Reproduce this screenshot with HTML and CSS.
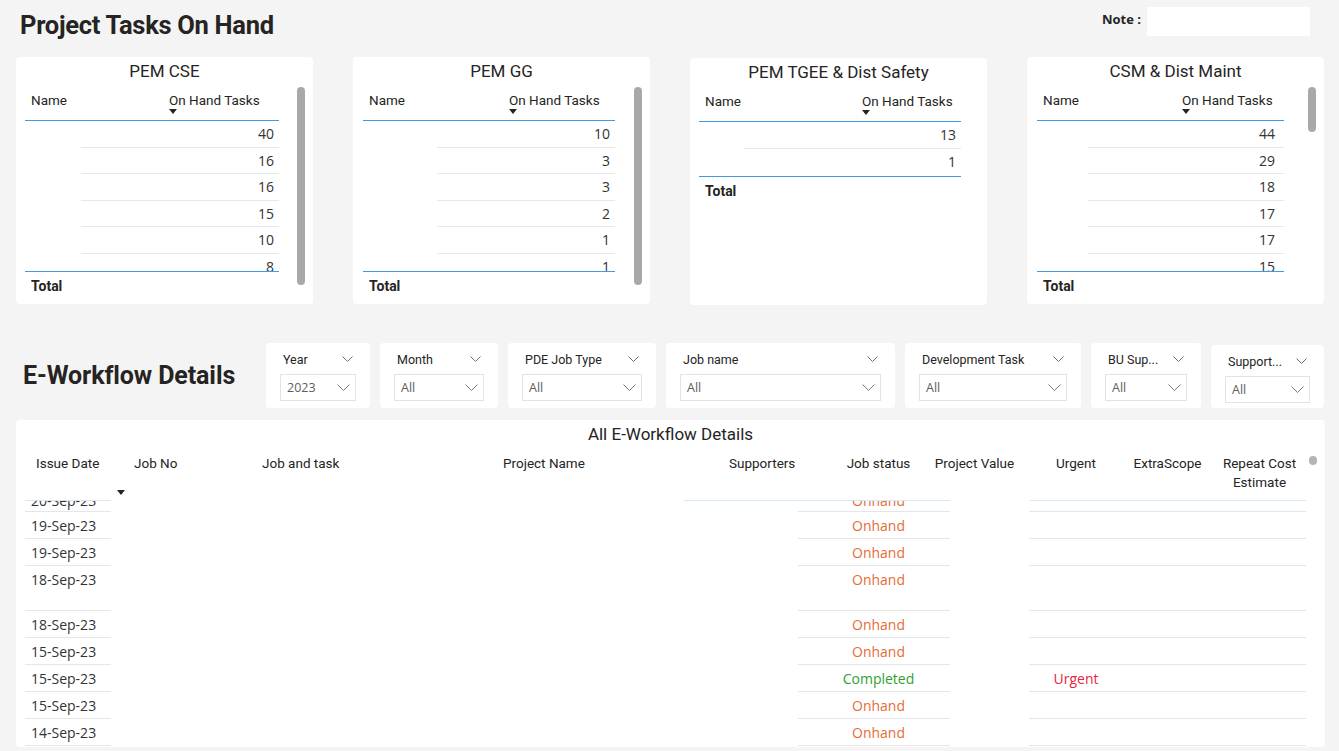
FILE: index.html
```html
<!DOCTYPE html>
<html lang="en">
<head>
<meta charset="utf-8">
<title>Project Tasks On Hand</title>
<link rel="stylesheet" href="styles.css">
</head>
<body>
<header class="topbar">
  <h1 class="page-title">Project Tasks On Hand</h1>
  <div class="note"><span class="note-label">Note :</span><div class="note-box"></div></div>
</header>

<section class="cards">
  <div class="card card-cse">
    <div class="card-title">PEM CSE</div>
    <div class="card-body">
      <div class="mtable">
        <div class="mhead"><div>Name</div><div>On Hand Tasks<span class="sort"></span></div></div>
        <div class="mbody">
          <div class="mrow">40</div><div class="mrow">16</div><div class="mrow">16</div>
          <div class="mrow">15</div><div class="mrow">10</div><div class="mrow">8</div>
        </div>
        <div class="mtotal">Total</div>
      </div>
      <div class="vscroll"><div class="thumb"></div></div>
    </div>
  </div>

  <div class="card card-gg">
    <div class="card-title">PEM GG</div>
    <div class="card-body">
      <div class="mtable">
        <div class="mhead"><div>Name</div><div>On Hand Tasks<span class="sort"></span></div></div>
        <div class="mbody">
          <div class="mrow">10</div><div class="mrow">3</div><div class="mrow">3</div>
          <div class="mrow">2</div><div class="mrow">1</div><div class="mrow">1</div>
        </div>
        <div class="mtotal">Total</div>
      </div>
      <div class="vscroll"><div class="thumb"></div></div>
    </div>
  </div>

  <div class="card card-tgee">
    <div class="card-title">PEM TGEE &amp; Dist Safety</div>
    <div class="card-body">
      <div class="mtable">
        <div class="mhead"><div>Name</div><div>On Hand Tasks<span class="sort"></span></div></div>
        <div class="mbody">
          <div class="mrow">13</div><div class="mrow">1</div>
        </div>
        <div class="mtotal">Total</div>
      </div>
    </div>
  </div>

  <div class="card card-dist">
    <div class="card-title">CSM &amp; Dist Maint</div>
    <div class="card-body">
      <div class="mtable">
        <div class="mhead"><div>Name</div><div>On Hand Tasks<span class="sort"></span></div></div>
        <div class="mbody">
          <div class="mrow">44</div><div class="mrow">29</div><div class="mrow">18</div>
          <div class="mrow">17</div><div class="mrow">17</div><div class="mrow">15</div>
        </div>
        <div class="mtotal">Total</div>
      </div>
      <div class="vscroll"><div class="thumb"></div></div>
    </div>
  </div>
</section>

<section class="filters">
  <h2 class="section-title">E-Workflow Details</h2>
  <div class="slicers">
    <div class="slicer s-year">
      <div class="slicer-head"><span>Year</span><svg class="chev" width="11" height="7" viewBox="0 0 11 7"><polyline points="0.5,0.5 5.5,5.5 10.5,0.5" fill="none" stroke="#6f6f6f" stroke-width="1"/></svg></div>
      <div class="dropdown"><span>2023</span><svg width="13" height="8" viewBox="0 0 13 8"><polyline points="0.5,0.5 6.5,6.5 12.5,0.5" fill="none" stroke="#7a7a7a" stroke-width="1"/></svg></div>
    </div>
    <div class="slicer s-month">
      <div class="slicer-head"><span>Month</span><svg class="chev" width="11" height="7" viewBox="0 0 11 7"><polyline points="0.5,0.5 5.5,5.5 10.5,0.5" fill="none" stroke="#6f6f6f" stroke-width="1"/></svg></div>
      <div class="dropdown"><span>All</span><svg width="13" height="8" viewBox="0 0 13 8"><polyline points="0.5,0.5 6.5,6.5 12.5,0.5" fill="none" stroke="#7a7a7a" stroke-width="1"/></svg></div>
    </div>
    <div class="slicer s-type">
      <div class="slicer-head"><span>PDE Job Type</span><svg class="chev" width="11" height="7" viewBox="0 0 11 7"><polyline points="0.5,0.5 5.5,5.5 10.5,0.5" fill="none" stroke="#6f6f6f" stroke-width="1"/></svg></div>
      <div class="dropdown"><span>All</span><svg width="13" height="8" viewBox="0 0 13 8"><polyline points="0.5,0.5 6.5,6.5 12.5,0.5" fill="none" stroke="#7a7a7a" stroke-width="1"/></svg></div>
    </div>
    <div class="slicer s-job">
      <div class="slicer-head"><span>Job name</span><svg class="chev" width="11" height="7" viewBox="0 0 11 7"><polyline points="0.5,0.5 5.5,5.5 10.5,0.5" fill="none" stroke="#6f6f6f" stroke-width="1"/></svg></div>
      <div class="dropdown"><span>All</span><svg width="13" height="8" viewBox="0 0 13 8"><polyline points="0.5,0.5 6.5,6.5 12.5,0.5" fill="none" stroke="#7a7a7a" stroke-width="1"/></svg></div>
    </div>
    <div class="slicer s-dev">
      <div class="slicer-head"><span>Development Task</span><svg class="chev" width="11" height="7" viewBox="0 0 11 7"><polyline points="0.5,0.5 5.5,5.5 10.5,0.5" fill="none" stroke="#6f6f6f" stroke-width="1"/></svg></div>
      <div class="dropdown"><span>All</span><svg width="13" height="8" viewBox="0 0 13 8"><polyline points="0.5,0.5 6.5,6.5 12.5,0.5" fill="none" stroke="#7a7a7a" stroke-width="1"/></svg></div>
    </div>
    <div class="slicer s-bu">
      <div class="slicer-head"><span>BU Sup...</span><svg class="chev" width="11" height="7" viewBox="0 0 11 7"><polyline points="0.5,0.5 5.5,5.5 10.5,0.5" fill="none" stroke="#6f6f6f" stroke-width="1"/></svg></div>
      <div class="dropdown"><span>All</span><svg width="13" height="8" viewBox="0 0 13 8"><polyline points="0.5,0.5 6.5,6.5 12.5,0.5" fill="none" stroke="#7a7a7a" stroke-width="1"/></svg></div>
    </div>
    <div class="slicer s-sup">
      <div class="slicer-head"><span>Support...</span><svg class="chev" width="11" height="7" viewBox="0 0 11 7"><polyline points="0.5,0.5 5.5,5.5 10.5,0.5" fill="none" stroke="#6f6f6f" stroke-width="1"/></svg></div>
      <div class="dropdown"><span>All</span><svg width="13" height="8" viewBox="0 0 13 8"><polyline points="0.5,0.5 6.5,6.5 12.5,0.5" fill="none" stroke="#7a7a7a" stroke-width="1"/></svg></div>
    </div>
  </div>
</section>

<section class="grid-card">
  <div class="grid-title">All E-Workflow Details</div>
  <div class="gtable">
    <div class="ghead">
      <div class="hc first">Issue Date<span class="sort"></span></div>
      <div class="hc">Job No</div>
      <div class="hc">Job and task</div>
      <div class="hc">Project Name</div>
      <div class="hc">Supporters</div>
      <div class="hc c">Job status</div>
      <div class="hc c">Project Value</div>
      <div class="hc c">Urgent</div>
      <div class="hc c">ExtraScope</div>
      <div class="hc c">Repeat Cost<br>Estimate</div>
    </div>
    <div class="gbody">
      <div class="grow partial"><div class="gc">20-Sep-23</div><div></div><div></div><div></div><div></div><div class="gc c onhand">Onhand</div><div></div><div></div><div></div><div></div></div>
      <div class="grow"><div class="gc">19-Sep-23</div><div></div><div></div><div></div><div></div><div class="gc c onhand">Onhand</div><div></div><div></div><div></div><div></div></div>
      <div class="grow"><div class="gc">19-Sep-23</div><div></div><div></div><div></div><div></div><div class="gc c onhand">Onhand</div><div></div><div></div><div></div><div></div></div>
      <div class="grow tall"><div class="gc">18-Sep-23</div><div></div><div></div><div></div><div></div><div class="gc c onhand">Onhand</div><div></div><div></div><div></div><div></div></div>
      <div class="grow"><div class="gc">18-Sep-23</div><div></div><div></div><div></div><div></div><div class="gc c onhand">Onhand</div><div></div><div></div><div></div><div></div></div>
      <div class="grow"><div class="gc">15-Sep-23</div><div></div><div></div><div></div><div></div><div class="gc c onhand">Onhand</div><div></div><div></div><div></div><div></div></div>
      <div class="grow"><div class="gc">15-Sep-23</div><div></div><div></div><div></div><div></div><div class="gc c done">Completed</div><div></div><div class="gc c urgent">Urgent</div><div></div><div></div></div>
      <div class="grow"><div class="gc">15-Sep-23</div><div></div><div></div><div></div><div></div><div class="gc c onhand">Onhand</div><div></div><div></div><div></div><div></div></div>
      <div class="grow"><div class="gc">14-Sep-23</div><div></div><div></div><div></div><div></div><div class="gc c onhand">Onhand</div><div></div><div></div><div></div><div></div></div>
    </div>
  </div>
  <div class="gscroll"></div>
</section>
</body>
</html>
```

FILE: styles.css
```css
* { box-sizing: border-box; margin: 0; padding: 0; }

body {
  width: 1339px;
  height: 751px;
  overflow: hidden;
  background: #f4f4f4;
  font-family: "Open Sans", "Noto Sans", sans-serif;
  color: #252423;
}

/* ---------- top bar ---------- */
.topbar {
  display: flex;
  height: 57px;
  padding: 0 29px 0 20px;
}
.page-title {
  font-family: Roboto, sans-serif;
  font-weight: 700;
  font-size: 25.5px;
  line-height: 30px;
  margin-top: 10px;
  letter-spacing: -0.3px;
}
.note {
  margin-left: auto;
  display: flex;
  align-items: flex-start;
  margin-top: 7px;
}
.note-label {
  font-weight: 700;
  font-size: 13px;
  line-height: 18px;
  margin-top: 3px;
  margin-right: 6px;
}
.note-box {
  width: 163px;
  height: 29px;
  background: #fff;
}

/* ---------- matrix cards ---------- */
.cards {
  display: grid;
  grid-template-columns: repeat(4, 297px);
  column-gap: 40px;
  padding-left: 16px;
  height: 247px;
}
.card {
  background: #fff;
  border-radius: 4px;
  height: 247px;
  padding-top: 3px;
}
.card-cse  { --tw: 254px; --nw: 138px; --sep: 56px; }
.card-gg   { --tw: 252px; --nw: 140px; --sep: 74px; }
.card-tgee { --tw: 262px; --nw: 157px; --sep: 45px; margin-top: 1px; }
.card-dist { --tw: 247px; --nw: 139px; --sep: 51px; }

.card-title {
  font-family: Roboto, sans-serif;
  font-size: 17px;
  line-height: 22px;
  text-align: center;
}
.card-body {
  display: flex;
  margin-top: 5px;
  padding-left: 9px;
}
.card-gg .card-body, .card-dist .card-body { padding-left: 10px; }
.mtable { width: var(--tw); }
.mhead {
  display: grid;
  grid-template-columns: var(--nw) 1fr;
  height: 34px;
  border-bottom: 1px solid #3d9be9;
  font-family: Roboto, sans-serif;
  font-size: 13.5px;
  line-height: 17px;
}
.mhead > div { padding: 5px 0 0 6px; }
.sort {
  display: block;
  width: 0;
  height: 0;
  border-left: 4px solid transparent;
  border-right: 4px solid transparent;
  border-top: 5px solid #252423;
}
.mbody {
  height: 151px;
  overflow: hidden;
  border-bottom: 1px solid #3d9be9;
}
.mrow {
  height: 26.6px;
  margin-left: var(--sep);
  border-bottom: 1px solid #e8e8e8;
  text-align: right;
  padding-right: 5px;
  font-size: 14px;
  line-height: 26px;
  color: #333;
}
.card-dist .mrow { padding-right: 9px; }
.card-tgee .mbody { height: auto; }
.card-tgee .mrow { height: 27px; }
.card-tgee .mrow:last-child { border-bottom: 0; }
.mtotal {
  font-family: Roboto, sans-serif;
  font-weight: 700;
  font-size: 14px;
  line-height: 28px;
  padding-left: 6px;
}
.vscroll {
  margin-left: auto;
  margin-right: 8px;
  width: 8px;
  height: 198px;
}
.thumb {
  background: #a9a9a9;
  border-radius: 4px;
  height: 198px;
}
.card-dist .thumb { height: 45px; }

/* ---------- filters ---------- */
.filters {
  display: flex;
  align-items: flex-start;
  height: 65px;
  margin-top: 39px;
  padding-left: 23px;
}
.section-title {
  flex: 0 0 243px;
  align-self: center;
  font-family: Roboto, sans-serif;
  font-weight: 700;
  font-size: 25px;
  line-height: 30px;
  letter-spacing: -0.1px;
}
.slicers { display: flex; gap: 10px; }
.slicer {
  background: #fff;
  border-radius: 4px;
  height: 65px;
  padding: 8px 14px 0;
}
.s-year  { width: 104px; }
.s-month { width: 118px; }
.s-type  { width: 148px; }
.s-job   { width: 229px; }
.s-dev   { width: 176px; }
.s-bu    { width: 110px; }
.s-sup   { width: 113px; margin-top: 2px; height: 63px; }
.slicer-head {
  display: flex;
  align-items: center;
  justify-content: space-between;
  height: 16px;
  padding: 0 3px;
  font-family: Roboto, sans-serif;
  font-size: 12.5px;
  white-space: nowrap;
}
.dropdown {
  margin-top: 7px;
  height: 27px;
  border: 1px solid #e3e3e3;
  display: flex;
  align-items: center;
  justify-content: space-between;
  padding: 0 5px 0 6px;
  font-size: 12.5px;
  color: #605e5c;
}

/* ---------- table card ---------- */
.grid-card {
  position: relative;
  margin: 12px 0 0 16px;
  width: 1309px;
  height: 327px;
  background: #fff;
  border-radius: 4px;
  overflow: hidden;
}
.grid-title {
  font-family: Roboto, sans-serif;
  font-size: 17px;
  line-height: 22px;
  padding-top: 3px;
  height: 25px;
  text-align: center;
}
.gtable { margin-left: 9px; width: 1281px; }
.ghead, .grow {
  display: grid;
  grid-template-columns: 99px 128px 241px 226px 119px 81px 111px 92px 91px 93px;
}
.ghead {
  height: 56px;
  padding-top: 9px;
  font-family: Roboto, sans-serif;
  font-size: 13.5px;
  line-height: 19px;
  background:
    linear-gradient(#d5e8f8, #d5e8f8) 0 100% / 86px 1px no-repeat,
    linear-gradient(#d5e8f8, #d5e8f8) 659px 100% / 266px 1px no-repeat,
    linear-gradient(#d5e8f8, #d5e8f8) 1005px 100% / 276px 1px no-repeat;
}
.hc { padding-left: 10px; white-space: nowrap; }
.hc.first { padding-left: 11px; }
.hc.c { text-align: center; padding-left: 0; }
.ghead .sort { margin: 17px 0 0 81px; }

.gbody { height: 246px; overflow: hidden; }
.grow {
  height: 27px;
  overflow: hidden;
  background:
    linear-gradient(#e6e6e6, #e6e6e6) 0 100% / 86px 1px no-repeat,
    linear-gradient(#e6e6e6, #e6e6e6) 773px 100% / 152px 1px no-repeat,
    linear-gradient(#e6e6e6, #e6e6e6) 1004px 100% / 277px 1px no-repeat;
}
.grow.partial { height: 11px; }
.grow.partial .gc { margin-top: -14px; }
.grow.tall { height: 45px; }
.gc {
  padding-left: 6px;
  font-size: 14px;
  line-height: 27px;
  white-space: nowrap;
  color: #333;
}
.gc.c { text-align: center; padding-left: 0; }
.onhand { color: #e66c37 !important; }
.done { color: #2f9f2f !important; }
.urgent { color: #e8253f !important; }

.gscroll {
  position: absolute;
  top: 36px;
  right: 8px;
  width: 8px;
  height: 9px;
  border-radius: 4px;
  background: #b5b5b5;
}
```
